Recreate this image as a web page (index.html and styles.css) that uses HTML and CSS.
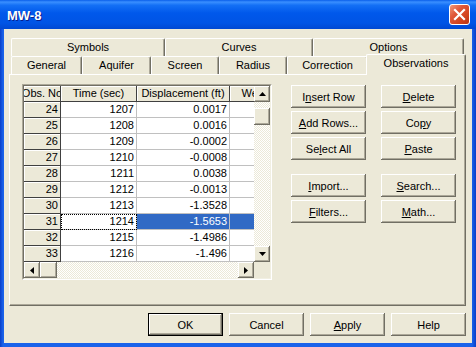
FILE: index.html
```html
<!DOCTYPE html>
<html>
<head>
<meta charset="utf-8">
<link rel="stylesheet" href="styles.css">
</head>
<body>
<div class="window">
  <div class="titlebar">
    <span class="title">MW-8</span>
    <div class="close">
      <svg width="13" height="13" viewBox="0 0 13 13"><path d="M2 2 L11 11 M11 2 L2 11" stroke="#fff" stroke-width="2.2" stroke-linecap="square"/></svg>
    </div>
  </div>
  <div class="frame">
    <div class="client">
      <div class="tabs">
        <div class="tabrow back">
          <div class="tab t-symbols">Symbols</div>
          <div class="tab t-curves">Curves</div>
          <div class="tab t-options">Options</div>
        </div>
        <div class="tabrow front">
          <div class="tab t-general">General</div>
          <div class="tab t-aquifer">Aquifer</div>
          <div class="tab t-screen">Screen</div>
          <div class="tab t-radius">Radius</div>
          <div class="tab t-correction">Correction</div>
          <div class="tab sel">Observations</div>
        </div>
      </div>
      <div class="panel">
        <div class="grid-frame">
          <div class="grid-inner">
            <div class="viewport">
              <div class="table">
                <div class="hc">Obs. No</div><div class="hc">Time (sec)</div><div class="hc">Displacement (ft)</div><div class="hc">Weight</div>
                <div class="rh">24</div><div class="c">1207</div><div class="c">0.0017</div><div class="c"></div>
                <div class="rh">25</div><div class="c">1208</div><div class="c">0.0016</div><div class="c"></div>
                <div class="rh">26</div><div class="c">1209</div><div class="c">-0.0002</div><div class="c"></div>
                <div class="rh">27</div><div class="c">1210</div><div class="c">-0.0008</div><div class="c"></div>
                <div class="rh">28</div><div class="c">1211</div><div class="c">0.0038</div><div class="c"></div>
                <div class="rh">29</div><div class="c">1212</div><div class="c">-0.0013</div><div class="c"></div>
                <div class="rh">30</div><div class="c">1213</div><div class="c">-1.3528</div><div class="c"></div>
                <div class="rh">31</div><div class="c focus">1214</div><div class="c hl">-1.5653</div><div class="c hl"></div>
                <div class="rh">32</div><div class="c">1215</div><div class="c">-1.4986</div><div class="c"></div>
                <div class="rh">33</div><div class="c">1216</div><div class="c">-1.496</div><div class="c"></div>
              </div>
            </div>
            <div class="vscroll">
              <div class="sb-btn"><svg width="7" height="4" viewBox="0 0 7 4"><path d="M3.5 0 L7 4 L0 4 Z" fill="#000"/></svg></div>
              <div class="vthumb"></div>
              <div class="sb-btn down"><svg width="7" height="4" viewBox="0 0 7 4"><path d="M0 0 L7 0 L3.5 4 Z" fill="#000"/></svg></div>
            </div>
            <div class="hscroll">
              <div class="sb-btn"><svg width="4" height="7" viewBox="0 0 4 7"><path d="M4 0 L4 7 L0 3.5 Z" fill="#000"/></svg></div>
              <div class="hthumb"></div>
              <div class="sb-btn right"><svg width="4" height="7" viewBox="0 0 4 7"><path d="M0 0 L4 3.5 L0 7 Z" fill="#000"/></svg></div>
            </div>
            <div class="corner"></div>
          </div>
        </div>
        <div class="actions">
          <div class="btn-group">
            <div class="btn">I<u>n</u>sert Row</div>
            <div class="btn"><u>D</u>elete</div>
            <div class="btn"><u>A</u>dd Rows...</div>
            <div class="btn">Co<u>p</u>y</div>
            <div class="btn">Se<u>l</u>ect All</div>
            <div class="btn"><u>P</u>aste</div>
          </div>
          <div class="btn-group second">
            <div class="btn"><u>I</u>mport...</div>
            <div class="btn"><u>S</u>earch...</div>
            <div class="btn"><u>F</u>ilters...</div>
            <div class="btn"><u>M</u>ath...</div>
          </div>
        </div>
      </div>
      <div class="footer">
        <div class="btn default">OK</div>
        <div class="btn">Cancel</div>
        <div class="btn"><u>A</u>pply</div>
        <div class="btn">Help</div>
      </div>
    </div>
  </div>
</div>
</body>
</html>
```

FILE: styles.css
```css
* { box-sizing: border-box; }
html, body { margin: 0; padding: 0; }
body {
  width: 476px;
  height: 347px;
  overflow: hidden;
  font-family: "Liberation Sans", Arial, sans-serif;
  font-size: 11px;
  color: #000;
  background: #fff;
}
.window {
  width: 476px;
  height: 347px;
  display: flex;
  flex-direction: column;
  background: #0A52DE;
}
.titlebar {
  height: 29px;
  flex: none;
  display: flex;
  align-items: center;
  padding: 0 6px 0 7px;
  background: linear-gradient(to bottom, #0A5FEA 0%, #3A8FFF 7%, #1470F5 18%, #0058EB 45%, #0054E5 80%, #0048D2 100%);
}
.title {
  flex: 1;
  color: #fff;
  font-weight: bold;
  font-size: 13px;
  text-shadow: 1px 1px #0A1E8C;
  margin-top: 1px;
}
.close {
  width: 21px;
  height: 21px;
  border: 1px solid #fff;
  border-radius: 3px;
  background: linear-gradient(135deg, #F09A7A 0%, #E0583A 35%, #D2431E 70%, #B93414 100%);
  display: flex;
  align-items: center;
  justify-content: center;
}
.frame {
  flex: 1;
  display: flex;
  padding: 0 4px 4px 4px;
  background: linear-gradient(to right, #0A3FC8 0px, #1A62EA 3px, #1A62EA 472px, #0A3FC8 476px);
}
.client {
  flex: 1;
  background: #ECE9D8;
  padding: 9px 6px 0 5px;
  display: flex;
  flex-direction: column;
}
.tabrow {
  display: flex;
  height: 18px;
  padding-left: 2px;
}
.tab {
  height: 18px;
  border-top: 1px solid #fff;
  border-left: 1px solid #fff;
  border-right: 1px solid #716F64;
  box-shadow: inset -1px 0 #ACA899;
  border-radius: 2px 2px 0 0;
  background: #ECE9D8;
  text-align: center;
  line-height: 16px;
  white-space: nowrap;
}
.t-symbols { width: 154px; }
.t-curves { width: 148px; }
.t-options { width: 151px; }
.t-general { width: 71px; }
.t-aquifer { width: 69px; }
.t-screen { width: 68px; }
.t-radius { width: 68px; }
.t-correction { width: 81px; }
.tab.sel {
  width: 100px;
  height: 21px;
  margin-top: -2px;
  margin-left: -2px;
  position: relative;
  z-index: 1;
}
.panel {
  height: 232px;
  flex: none;
  border-top: 1px solid #fff;
  border-left: 1px solid #fff;
  border-right: 1px solid #716F64;
  border-bottom: 1px solid #716F64;
  box-shadow: inset -1px -1px #ACA899;
  display: flex;
  align-items: flex-start;
  padding: 9px 0 0 12px;
}
.grid-frame {
  width: 250px;
  height: 196px;
  border: 1px solid;
  border-color: #ACA899 #fff #fff #ACA899;
}
.grid-inner {
  width: 248px;
  height: 194px;
  border: 1px solid;
  border-color: #716F64 #F1EFE2 #F1EFE2 #716F64;
  display: grid;
  grid-template-columns: 230px 16px;
  grid-template-rows: 176px 16px;
  background: #ECE9D8;
}
.viewport {
  overflow: hidden;
  background: #fff;
}
.table {
  display: grid;
  grid-template-columns: 37px 76px 93px 58px;
  grid-auto-rows: 16px;
  width: 264px;
}
.hc, .rh {
  background: #ECE9D8;
  border-right: 1px solid #404040;
  border-bottom: 1px solid #404040;
  box-shadow: inset 1px 1px #fff;
  line-height: 15px;
  white-space: nowrap;
  overflow: hidden;
}
.hc {
  display: flex;
  justify-content: center;
}
.rh {
  text-align: right;
  padding-right: 2px;
}
.c {
  border-right: 1px solid #C0C0C0;
  border-bottom: 1px solid #C0C0C0;
  text-align: right;
  padding-right: 2px;
  line-height: 15px;
  white-space: nowrap;
}
.c.focus {
  outline: 1px dotted #000;
  outline-offset: -1px;
}
.c.hl {
  background: #316AC5;
  color: #fff;
}
.sb-btn {
  width: 16px;
  height: 16px;
  flex: none;
  background: #ECE9D8;
  box-shadow: inset -1px -1px #716F64, inset 1px 1px #fff, inset -2px -2px #ACA899;
  display: flex;
  align-items: center;
  justify-content: center;
}
.sb-btn svg { display: block; }
.vscroll, .hscroll {
  display: flex;
  background-color: #ECE9D8;
  background-image: conic-gradient(#fff 25%, #ECE9D8 0 50%, #fff 0 75%, #ECE9D8 0);
  background-size: 2px 2px;
}
.vscroll { flex-direction: column; }
.vthumb {
  width: 16px;
  height: 17px;
  margin-top: 6px;
  background: #ECE9D8;
  box-shadow: inset -1px -1px #716F64, inset 1px 1px #fff, inset -2px -2px #ACA899;
}
.sb-btn.down { margin-top: auto; }
.hthumb {
  width: 17px;
  height: 16px;
  background: #ECE9D8;
  box-shadow: inset -1px -1px #716F64, inset 1px 1px #fff, inset -2px -2px #ACA899;
}
.sb-btn.right { margin-left: auto; }
.corner { background: #ECE9D8; }
.actions {
  margin: 1px 0 0 19px;
}
.btn-group {
  display: grid;
  grid-template-columns: 75px 75px;
  grid-auto-rows: 23px;
  column-gap: 15px;
  row-gap: 3px;
}
.btn-group.second { margin-top: 14px; }
.btn {
  width: 75px;
  height: 23px;
  background: #ECE9D8;
  box-shadow: inset -1px -1px #716F64, inset 1px 1px #fff, inset -2px -2px #ACA899;
  display: flex;
  align-items: center;
  justify-content: center;
  white-space: nowrap;
}
.btn u { text-decoration: underline; text-underline-offset: 1px; }
.btn.default {
  box-shadow: inset 0 0 0 1px #000, inset -2px -2px #716F64, inset 2px 2px #fff, inset -3px -3px #ACA899;
}
.footer {
  margin-top: 7px;
  display: flex;
  justify-content: flex-end;
  gap: 6px;
}
```
